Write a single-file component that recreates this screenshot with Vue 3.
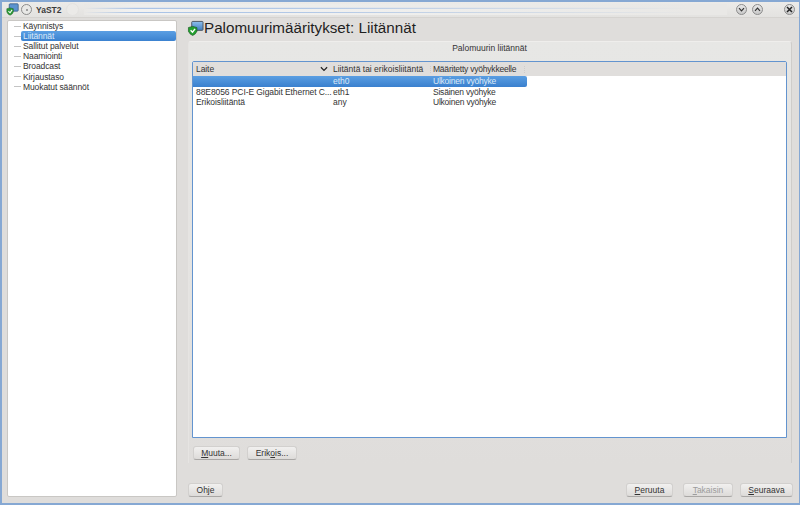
<script setup>
const navItems = ['Käynnistys', 'Liitännät', 'Sallitut palvelut', 'Naamiointi', 'Broadcast', 'Kirjaustaso', 'Muokatut säännöt']
const rows = [
  { dev: '', iface: 'eth0', zone: 'Ulkoinen vyöhyke', sel: true },
  { dev: '88E8056 PCI-E Gigabit Ethernet C...', iface: 'eth1', zone: 'Sisäinen vyöhyke' },
  { dev: 'Erikoisliitäntä', iface: 'any', zone: 'Ulkoinen vyöhyke' }
]
</script>

<template>
  <div class="win">
    <header class="titlebar">
      <svg class="tico" width="13" height="13" viewBox="0 0 16 16">
        <rect x="4" y="1" width="11" height="9" rx="1" fill="#5b93cf" stroke="#3c5f86" />
        <path d="M1 7 L5 6 L9 7 V11 Q8 14 5 15 Q2 14 1 11 Z" fill="#2a9a35" stroke="#1b5f22" stroke-width=".6" />
        <path d="M3 10 L5 12 L7.5 8.5" fill="none" stroke="#fff" stroke-width="1.3" />
      </svg>
      <span class="round pin"><i></i></span>
      <span class="wtitle">YaST2</span>
      <span class="ghost"></span>
      <div class="stripes"></div>
      <div class="wbtns">
        <span class="round"><svg width="7" height="7" viewBox="0 0 7 7"><path d="M1 2.2 L3.5 4.8 L6 2.2" fill="none" stroke="#333" stroke-width="1.2" /></svg></span>
        <span class="round"><svg width="7" height="7" viewBox="0 0 7 7"><path d="M1 4.8 L3.5 2.2 L6 4.8" fill="none" stroke="#333" stroke-width="1.2" /></svg></span>
        <span class="round close"><svg width="7" height="7" viewBox="0 0 7 7"><path d="M1 1 L6 6 M6 1 L1 6" fill="none" stroke="#222" stroke-width="1.5" /></svg></span>
      </div>
    </header>

    <div class="body">
      <aside class="tree">
        <div v-for="(item, i) in navItems" :key="item" class="node" :class="{ on: i === 1 }">
          <span class="twig"></span>
          <span class="nlabel">{{ item }}</span>
        </div>
      </aside>

      <main class="main">
        <div class="heading">
          <svg width="17" height="16" viewBox="0 0 17 17">
            <defs>
              <linearGradient id="scr" x1="0" y1="0" x2="0" y2="1">
                <stop offset="0" stop-color="#8fc0ee" />
                <stop offset="1" stop-color="#3f7dc0" />
              </linearGradient>
            </defs>
            <rect x="4.5" y="1.5" width="12" height="9.5" rx="1" fill="url(#scr)" stroke="#46525f" />
            <path d="M1 8 L5.5 6.8 L10 8 V12 Q9 15 5.5 16.5 Q2 15 1 12 Z" fill="#23a030" stroke="#185c20" stroke-width=".7" />
            <path d="M3.3 11 L5.3 13 L8 9.5" fill="none" stroke="#fff" stroke-width="1.5" />
          </svg>
          <h1>Palomuurimääritykset: Liitännät</h1>
        </div>

        <section class="group">
          <div class="gtitle">Palomuurin liitännät</div>
          <div class="table">
            <div class="thead">
              <div class="th c1"><span>Laite</span>
                <svg width="8" height="6" viewBox="0 0 9 6"><path d="M1 1 L4.5 4.5 L8 1" fill="none" stroke="#222" stroke-width="1.4" /></svg>
              </div>
              <div class="th c2 grip"><span>Liitäntä tai erikoisliitäntä</span></div>
              <div class="th c3 grip"><span>Määritetty vyöhykkeelle</span></div>
            </div>
            <div v-for="r in rows" :key="r.iface" class="tr" :class="{ sel: r.sel }">
              <div class="td c1">{{ r.dev }}</div>
              <div class="td c2">{{ r.iface }}</div>
              <div class="td c3">{{ r.zone }}</div>
            </div>
          </div>
          <div class="gbtns">
            <button class="btn muuta"><u>M</u>uuta...</button>
            <button class="btn erik">Erik<u>o</u>is...</button>
          </div>
        </section>

        <footer class="foot">
          <button class="btn ohje">Ohje</button>
          <div class="right">
            <button class="btn per"><u>P</u>eruuta</button>
            <button class="btn tak" disabled><u>T</u>akaisin</button>
            <button class="btn seu"><u>S</u>euraava</button>
          </div>
        </footer>
      </main>
    </div>
  </div>
</template>

<style>
html, body { margin: 0; background: #dfdddb; }
</style>

<style scoped>
.win {
  width: 800px;
  height: 505px;
  box-sizing: border-box;
  border: 1px solid #86a8d3;
  border-top-width: 2px;
  border-left-width: 2px;
  border-bottom-width: 2px;
  background: #dfdddb;
  font: 8.5px/10px "Liberation Sans", Arial, sans-serif;
  color: #333;
  display: flex;
  flex-direction: column;
  overflow: hidden;
}
.titlebar {
  height: 15px;
  flex: none;
  display: flex;
  align-items: center;
  background: linear-gradient(#ecebe9, #e3e2e0);
  border-bottom: 1px solid #d5d3d0;
  padding-left: 4px;
}
.tico { margin-right: 2px; }
.round {
  width: 9px;
  height: 9px;
  border-radius: 50%;
  border: 1px solid #8c8c8c;
  background: linear-gradient(#e8e8e8, #c8c8c8);
  display: flex;
  align-items: center;
  justify-content: center;
  flex: none;
}
.pin { background: #e8e8e6; margin-right: 4px; }
.pin i { width: 2px; height: 2px; background: #888; border-radius: 50%; }
.wtitle { font-weight: 700; font-size: 8.5px; color: #3a3a3a; width: 26px; }
.ghost {
  width: 11px;
  height: 11px;
  margin-left: 4px;
  border-radius: 50%;
  border: 1px solid #e4e3e1;
  background: #ebeae8;
  flex: none;
}
.stripes {
  flex: 1;
  height: 11px;
  margin: 0 9px 0 5px;
  background:
    linear-gradient(90deg, #e9e8e6, rgba(233,232,230,0) 8%, rgba(233,232,230,.15) 35%, #e9e8e6 95%),
    linear-gradient(#eeeeec 0, #eeeeec 3px, #dfe5ee 3px, #dfe5ee 4px, #a9c3e6 4px, #a9c3e6 5px, #f2f2f1 5px, #f2f2f1 8px, #a9c3e6 8px, #a9c3e6 9px, #f2f2f1 9px);
}
.wbtns { display: flex; align-items: center; padding-right: 4px; }
.wbtns .round + .round { margin-left: 5px; }
.wbtns .close { margin-left: 21px !important; }

.body {
  flex: 1;
  display: flex;
  min-height: 0;
  padding: 2px 4px 6px 5px;
  gap: 10px;
}
.tree {
  width: 170px;
  flex: none;
  background: #fff;
  border: 1px solid #c9c7c4;
  border-radius: 2px;
  box-sizing: border-box;
}
.node { height: 10.1px; display: flex; align-items: center; color: #333; }
.twig { width: 7px; height: 1px; background: #c4c4c4; margin-left: 6px; flex: none; }
.nlabel { flex: 1; padding-left: 2px; line-height: 10px; height: 10px; letter-spacing: -.1px; }
.node.on .nlabel {
  background: linear-gradient(#5b9fe3, #3b82d0);
  border-radius: 2px;
  color: #dce9f7;
}

.main { flex: 1; min-width: 0; display: flex; flex-direction: column; }
.heading {
  height: 19px;
  box-sizing: border-box;
  padding-bottom: 3px;
  display: flex;
  align-items: center;
  flex: none;
}
.heading h1 {
  margin: 0;
  font: 400 15.2px/16px "Liberation Sans", Arial, sans-serif;
  color: #1f1f1f;
}
.group {
  margin: 2px 0 0 1px;
  height: 422px;
  box-sizing: border-box;
  flex: none;
  width: 604px;
  border-top: 1px solid #efeeec;
  border-left: 1px solid #e6e4e2;
  border-right: 1px solid #cfcdca;
  border-radius: 3px 3px 0 0;
  background: linear-gradient(#e7e7e5 0, #e4e3e1 60%, #dfdddb 100%);
  padding: 0 4px 0 3px;
  display: flex;
  flex-direction: column;
}
.gtitle { text-align: center; height: 19px; line-height: 13px; color: #333; flex: none; }
.table {
  height: 377px;
  flex: none;
  box-sizing: border-box;
  border: 1px solid #6394cf;
  background: #fff;
  border-radius: 2px 2px 0 0;
  overflow: hidden;
}
.thead {
  height: 14px;
  background: #e0dedc;
  display: flex;
  align-items: center;
}
.c1 { width: 138px; flex: none; box-sizing: border-box; padding-left: 3px; white-space: nowrap; letter-spacing: -.08px; }
.c2 { width: 100px; flex: none; padding-left: 2px; box-sizing: border-box; white-space: nowrap; }
.c3 { width: 94px; flex: none; box-sizing: border-box; padding-left: 2px; white-space: nowrap; letter-spacing: -.22px; }
.th { display: flex; align-items: center; justify-content: space-between; }
.th.c1 { padding-right: 3px; }
.th.grip { height: 7px; border-right: 1px dotted #cfcdcb; }
.tr { height: 10px; display: flex; line-height: 10px; color: #333; width: 334px; }
.tr.sel {
  height: 11px;
  line-height: 11px;
  background: linear-gradient(#5a9ee2, #3a80ce);
  color: #dce9f7;
  border-radius: 0 2px 2px 0;
}
.gbtns { display: flex; gap: 7px; padding: 8px 0 0 1px; flex: none; }

.btn {
  height: 14px;
  box-sizing: border-box;
  padding: 0;
  border: 1px solid #d2d0ce;
  border-bottom: 1px solid #a9a7a5;
  border-radius: 3px;
  background: linear-gradient(#f1f0ef, #dddbd9);
  font: 8.5px/11px "Liberation Sans", Arial, sans-serif;
  color: #333;
  text-align: center;
}
.btn u { text-underline-offset: 1px; }
.muuta { width: 47px; }
.erik { width: 50px; }
.ohje { width: 35px; }
.per { width: 47px; margin-right: 3px; }
.tak { width: 50px; color: #9c9c9c; }
.seu { width: 53px; }
.foot {
  margin: 20px 0 0 1px;
  display: flex;
  justify-content: space-between;
  flex: none;
  width: 605px;
}
.right { display: flex; gap: 7px; }
</style>
